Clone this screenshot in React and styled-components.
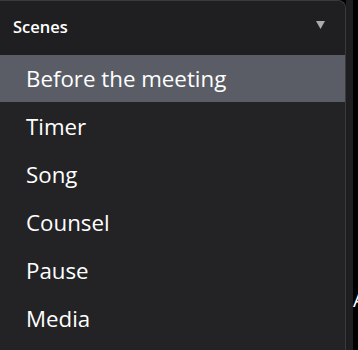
import React, { useState } from "react";
import styled, { createGlobalStyle } from "styled-components";

const GlobalStyle = createGlobalStyle`
  html, body {
    margin: 0;
    padding: 0;
    background: #000;
  }
  body {
    font-family: "Open Sans", "Noto Sans", sans-serif;
  }
`;

const scenes = ["Before the meeting", "Timer", "Song", "Counsel", "Pause", "Media"];

function App() {
  const [selected, setSelected] = useState(0);

  return (
    <>
      <GlobalStyle />
      <Page>
        <Panel>
          <Header>
            <Title>Scenes</Title>
            <Caret width="9" height="8" viewBox="0 0 9 8">
              <path d="M0 0 H9 L4.5 8 Z" fill="#a9abb0" />
            </Caret>
          </Header>
          <List>
            {scenes.map((name, i) => (
              <Item key={name} $active={i === selected} onClick={() => setSelected(i)}>
                {name}
              </Item>
            ))}
          </List>
        </Panel>
        <Gutter />
        <Edge>
          <Glyph>A</Glyph>
        </Edge>
      </Page>
    </>
  );
}

// 전체 화면
const Page = styled.div`
  width: 358px;
  height: 350px;
  display: flex;
  overflow: hidden;
  background: #000;
`;

// 패널
const Panel = styled.div`
  width: 346px;
  flex-shrink: 0;
  height: 350px;
  background: #232325;
  border-top: 1px solid #3a3a3d;
  border-right: 1px solid #3a3a3d;
  border-top-right-radius: 8px;
  box-sizing: border-box;
  display: flex;
  flex-direction: column;
`;

const Header = styled.div`
  height: 54px;
  flex-shrink: 0;
  background: #1f1f21;
  display: flex;
  align-items: center;
  justify-content: space-between;
  padding: 0 20px 0 13px;
  border-top-right-radius: 8px;
`;

const Title = styled.span`
  color: #fff;
  font-size: 16.5px;
  font-weight: 600;
  margin-top: -4px;
`;

const Caret = styled.svg`
  margin-top: -6px;
`;

const List = styled.div`
  display: flex;
  flex-direction: column;
`;

const Item = styled.div`
  height: 47px;
  display: flex;
  align-items: center;
  padding-left: 26px;
  margin-bottom: 1px;
  color: #fff;
  font-size: 22.3px;
  cursor: pointer;
  background: ${(p) => (p.$active ? "#5a5d66" : "transparent")};
`;

const Gutter = styled.div`
  width: 7px;
  flex-shrink: 0;
  background: #1e1e20;
`;

const Edge = styled.div`
  flex: 1;
  display: flex;
  flex-direction: column;
  justify-content: flex-end;
  padding-bottom: 40px;
`;

const Glyph = styled.span`
  color: #fff;
  font-size: 20px;
  font-family: "Open Sans", sans-serif;
  line-height: 1;
`;

export default App;
